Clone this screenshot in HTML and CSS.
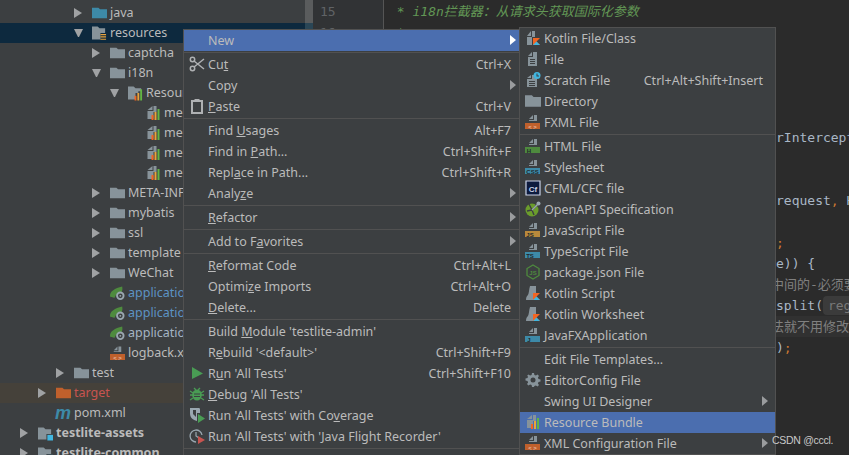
FILE: index.html
```html
<!DOCTYPE html>
<html lang="en">
<head>
<meta charset="utf-8">
<title>IDE context menu</title>
<link rel="stylesheet" href="styles.css">
</head>
<body>
<svg class="sprite" aria-hidden="true">
  <defs>
    <symbol id="folder" viewBox="0 0 14 14"><path d="M0 2h6l1.500 1.500H14V12H0z" fill="#87939a"/></symbol>
    <symbol id="folder-src" viewBox="0 0 14 14"><path d="M0 2h6l1.500 1.500H14V12H0z" fill="#3d8aa8"/></symbol>
    <symbol id="folder-orange" viewBox="0 0 14 14"><path d="M0 2h6l1.500 1.500H14V12H0z" fill="#c0602c"/></symbol>
    <symbol id="folder-res" viewBox="0 0 16 16"><path d="M0 1h6l2 2h6v5H9v7H0z" fill="#87939a"/><path d="M9 9h6v1.300H9zM9 11.500h6v1.300H9zM9 14h6v1.300H9z" fill="#e8a33d"/></symbol>
    <symbol id="folder-mod" viewBox="0 0 16 16"><path d="M0 2h6l2 2h6v5H9v6H0z" fill="#87939a"/><path d="M10 10h6v6h-6z" fill="#40b6e0"/></symbol>
    <symbol id="folder-bundle" viewBox="0 0 16 16"><path d="M0 1h6l2 2h6v3h-3v2H8v7H0z" fill="#87939a"/><path d="M7 11h2v5H7z" fill="#f26522"/><path d="M10 8h2v8h-2z" fill="#e8a33d"/><path d="M13 4h2v12h-2z" fill="#62b543"/></symbol>
    <symbol id="doc-bundle" viewBox="0 0 14 16"><path d="M6 1v4H1zM7 1h3v6H7v7H1V6h6z" fill="#87939a"/><path d="M5 10h2v5H5z" fill="#f26522"/><path d="M8 7h2v8H8z" fill="#e8a33d"/><path d="M11 4h2v11h-2z" fill="#62b543"/></symbol>
    <symbol id="spring" viewBox="0 0 16 16"><path d="M0 11C0 6 5 3 13 1c1 5-1 7-4 8-2 .5-3 1-4 4-3 0-5 0-5-2z" fill="#4e8a3e"/><circle cx="11" cy="11" r="4.500" fill="#9aa7b0"/><circle cx="11" cy="11" r="2.500" fill="#3c3f41"/><circle cx="11" cy="11" r="1" fill="#9aa7b0"/></symbol>
    <symbol id="doc" viewBox="0 0 16 16"><path d="M7 1v4H3zM8 1h1l3 0v14H3V6h5z" fill="#87939a"/><path d="M5 8h5v1H5zM5 10h5v1H5zM5 12h5v1H5z" fill="#3c3f41"/></symbol>
    <symbol id="doc-scratch" viewBox="0 0 16 16"><path d="M6 3v3H2zM7 3h2v3h3v9H2V7h5z" fill="#87939a"/><path d="M4 9h6v1H4zM4 11h6v1H4zM4 13h6v1H4z" fill="#3c3f41"/><circle cx="12" cy="3.500" r="3.500" fill="#40b6e0"/><path d="M11.500 1.500h1v2h1.500v1h-2.500z" fill="#3c3f41"/></symbol>
    <symbol id="kotlin-file" viewBox="0 0 16 16"><path d="M6 1v5H2zM7 1h3v6H7v8H2V7h5z" fill="#87939a"/><path d="M8 8h7l-3.500 3.500L15 15H8z" fill="#f26522"/><path d="M8 15l3.500-3.500L15 15z" fill="#40b6e0"/></symbol>
    <symbol id="kotlin-script" viewBox="0 0 16 16"><path d="M5 1h6v7H8v7H1c0-3 1-4 2-5 1-2 1-6 2-9z" fill="#87939a"/><path d="M8 8h7l-3.500 3.500L15 15H8z" fill="#f26522"/><path d="M8 15l3.500-3.500L15 15z" fill="#40b6e0"/></symbol>
    <symbol id="band-doc" viewBox="0 0 16 16"><path d="M8 1v4H4zM9 1h3v6H4V6h5z" fill="#87939a"/></symbol>
    <symbol id="cf" viewBox="0 0 16 16"><path d="M1 1h14v14H1z" fill="#0d1b3e" stroke="#c9d2e8" stroke-width="1.200"/></symbol>
    <symbol id="openapi" viewBox="0 0 16 16"><circle cx="7" cy="9" r="6.500" fill="#6b9d2c"/><path d="M4 3l3 6-5 1M7 9l3-3 3-4M7 9l2 5" stroke="#3c3f41" stroke-width="1.400" fill="none"/><circle cx="13.500" cy="2.500" r="2" fill="#9aa7b0"/><path d="M7 9l6-6" stroke="#9aa7b0" stroke-width="1.400"/></symbol>
    <symbol id="nodejs" viewBox="0 0 16 16"><path d="M8 1l6 3.500v7L8 15l-6-3.500v-7z" fill="none" stroke="#4e8a3e" stroke-width="1.300"/></symbol>
    <symbol id="gear" viewBox="0 0 16 16"><path d="M7 1h2l.4 2 1.500.6L12.600 2.500 14 3.900l-1.100 1.700.6 1.500 2 .4v2l-2 .4-.6 1.500 1.100 1.700-1.400 1.400-1.700-1.100-1.500.6L9 15H7l-.4-2-1.500-.6-1.700 1.100L2 12.100l1.100-1.700-.6-1.500-2-.4v-2l2-.4.6-1.500L2 3.900l1.400-1.400 1.700 1.100 1.500-.6z" fill="#87939a"/><circle cx="8" cy="8" r="2.500" fill="#3c3f41"/></symbol>
    <symbol id="cut" viewBox="0 0 16 16"><g fill="none" stroke="#afb1b3" stroke-width="1.500"><circle cx="3.500" cy="3.500" r="2.200"/><circle cx="3.500" cy="12.500" r="2.200"/><path d="M5 5l10 8M5 11L15 3"/></g></symbol>
    <symbol id="paste" viewBox="0 0 16 16"><path d="M3 3h10v12H3z" fill="none" stroke="#afb1b3" stroke-width="2"/><path d="M5.500 1h5v3h-5z" fill="#afb1b3"/></symbol>
    <symbol id="run" viewBox="0 0 16 16"><path d="M3 2l11 6.500L3 14z" fill="#499c54"/></symbol>
    <symbol id="debug" viewBox="0 0 16 16"><path d="M1 5l3 2M15 5l-3 2M1 9h3M15 9h-3M1 14l3-2M15 14l-3-2M5 2l2 2M11 2L9 4" stroke="#499c54" stroke-width="1.300"/><ellipse cx="8" cy="9" rx="4.800" ry="5.500" fill="#499c54"/><path d="M5 7.500h6v1H5zM5 10h6v1H5z" fill="#3c3f41"/></symbol>
    <symbol id="coverage" viewBox="0 0 16 16"><path d="M1 1h9c1 0 1 1 1 2v3H8v8C4 13 1 11 1 6z" fill="#9aa7b0"/><path d="M4 3h3v7L4 7z" fill="#3c3f41"/><path d="M9 7l7 4.500L9 16z" fill="#499c54"/></symbol>
    <symbol id="recorder" viewBox="0 0 16 16"><path d="M7 14A6 6 0 1 1 13 7" fill="none" stroke="#9aa7b0" stroke-width="1.300"/><path d="M7 4v4l3 2" fill="none" stroke="#9aa7b0" stroke-width="1.200"/><path d="M9 8l7 4-7 4z" fill="#c75450"/></symbol>
  </defs>
</svg>

<main class="ide">
  <section class="tree">
    <div class="row d3"><i class="arr"></i><svg class="ti"><use href="#folder-src"/></svg><span>java</span></div>
    <div class="row d3 sel"><i class="arr down"></i><svg class="ti"><use href="#folder-res"/></svg><span>resources</span></div>
    <div class="row d4"><i class="arr"></i><svg class="ti"><use href="#folder"/></svg><span>captcha</span></div>
    <div class="row d4"><i class="arr down"></i><svg class="ti"><use href="#folder"/></svg><span>i18n</span></div>
    <div class="row d5"><i class="arr down"></i><svg class="ti"><use href="#folder-bundle"/></svg><span>Resource Bundle 'messages'</span></div>
    <div class="row d6"><i class="arr none"></i><svg class="ti"><use href="#doc-bundle"/></svg><span>messages.properties</span></div>
    <div class="row d6"><i class="arr none"></i><svg class="ti"><use href="#doc-bundle"/></svg><span>messages_en.properties</span></div>
    <div class="row d6"><i class="arr none"></i><svg class="ti"><use href="#doc-bundle"/></svg><span>messages_ja.properties</span></div>
    <div class="row d6"><i class="arr none"></i><svg class="ti"><use href="#doc-bundle"/></svg><span>messages_zh.properties</span></div>
    <div class="row d4"><i class="arr"></i><svg class="ti"><use href="#folder"/></svg><span>META-INF</span></div>
    <div class="row d4"><i class="arr"></i><svg class="ti"><use href="#folder"/></svg><span>mybatis</span></div>
    <div class="row d4"><i class="arr"></i><svg class="ti"><use href="#folder"/></svg><span>ssl</span></div>
    <div class="row d4"><i class="arr"></i><svg class="ti"><use href="#folder"/></svg><span>template</span></div>
    <div class="row d4"><i class="arr"></i><svg class="ti"><use href="#folder"/></svg><span>WeChat</span></div>
    <div class="row d4"><i class="arr none"></i><svg class="ti"><use href="#spring"/></svg><span class="blue">application.yml</span></div>
    <div class="row d4"><i class="arr none"></i><svg class="ti"><use href="#spring"/></svg><span class="blue">application-dev.yml</span></div>
    <div class="row d4"><i class="arr none"></i><svg class="ti"><use href="#spring"/></svg><span class="pale">application-prod.yml</span></div>
    <div class="row d4"><i class="arr none"></i><svg class="ti xml"><use href="#band-doc"/><rect x="0" y="9" width="15" height="6" fill="#c0602c"/><text x="7.500" y="14.500" class="band-t">&lt; &gt;</text></svg><span>logback.xml</span></div>
    <div class="row d2"><i class="arr"></i><svg class="ti"><use href="#folder"/></svg><span>test</span></div>
    <div class="row d1 excluded"><i class="arr"></i><svg class="ti"><use href="#folder-orange"/></svg><span class="red">target</span></div>
    <div class="row d1"><i class="arr none"></i><svg class="ti" viewBox="0 0 15 15"><text x="-1" y="13" class="maven">m</text></svg><span>pom.xml</span></div>
    <div class="row d0"><i class="arr"></i><svg class="ti"><use href="#folder-mod"/></svg><span class="bold">testlite-assets</span></div>
    <div class="row d0"><i class="arr"></i><svg class="ti"><use href="#folder-mod"/></svg><span class="bold">testlite-common</span></div>
  </section>
  <div class="scroll"><div class="scroll-sel"></div></div>
  <div class="gutter">
    <div class="ln">15</div>
    <div class="ln">16</div>
  </div>
  <section class="editor">
    <div class="cl cm"> * i18n拦截器&#xFF1A;从请求头获取国际化参数</div>
    <div class="cl cm"> *</div>
    <div class="cl"></div>
    <div class="cl"></div>
    <div class="cl"></div>
    <div class="cl"></div>
    <div class="cl r">rInterceptor {</div>
    <div class="cl"></div>
    <div class="cl"></div>
    <div class="cl r">request<b>,</b> HttpServletResponse</div>
    <div class="cl"></div>
    <div class="cl r"><b>;</b></div>
    <div class="cl r">e)) {</div>
    <div class="cl r cjk">中间的-必须要</div>
    <div class="cl r">split(<em class="hint">regex: "-"</em></div>
    <div class="cl r cjk tint">法就不用修改</div>
    <div class="cl r">)<b>;</b></div>
  </section>
</main>

<nav class="menu main-menu">
  <div class="item sub on"><span class="ic"></span><span class="lb">New</span><i class="tri lit"></i></div>
  <hr>
  <div class="item"><svg class="ic"><use href="#cut"/></svg><span class="lb">Cu<u>t</u></span><span class="sc">Ctrl+X</span></div>
  <div class="item sub"><span class="ic"></span><span class="lb">Copy</span><i class="tri"></i></div>
  <div class="item"><svg class="ic"><use href="#paste"/></svg><span class="lb"><u>P</u>aste</span><span class="sc">Ctrl+V</span></div>
  <hr>
  <div class="item"><span class="ic"></span><span class="lb">Find <u>U</u>sages</span><span class="sc">Alt+F7</span></div>
  <div class="item"><span class="ic"></span><span class="lb">Find in <u>P</u>ath...</span><span class="sc">Ctrl+Shift+F</span></div>
  <div class="item"><span class="ic"></span><span class="lb">Repl<u>a</u>ce in Path...</span><span class="sc">Ctrl+Shift+R</span></div>
  <div class="item sub"><span class="ic"></span><span class="lb">Analy<u>z</u>e</span><i class="tri"></i></div>
  <hr>
  <div class="item sub"><span class="ic"></span><span class="lb"><u>R</u>efactor</span><i class="tri"></i></div>
  <hr>
  <div class="item sub"><span class="ic"></span><span class="lb">Add to F<u>a</u>vorites</span><i class="tri"></i></div>
  <hr>
  <div class="item"><span class="ic"></span><span class="lb"><u>R</u>eformat Code</span><span class="sc">Ctrl+Alt+L</span></div>
  <div class="item"><span class="ic"></span><span class="lb">Optimi<u>z</u>e Imports</span><span class="sc">Ctrl+Alt+O</span></div>
  <div class="item"><span class="ic"></span><span class="lb"><u>D</u>elete...</span><span class="sc">Delete</span></div>
  <hr>
  <div class="item"><span class="ic"></span><span class="lb">Build <u>M</u>odule 'testlite-admin'</span></div>
  <div class="item"><span class="ic"></span><span class="lb">R<u>e</u>build '&lt;default&gt;'</span><span class="sc">Ctrl+Shift+F9</span></div>
  <div class="item"><svg class="ic"><use href="#run"/></svg><span class="lb">R<u>u</u>n 'All Tests'</span><span class="sc">Ctrl+Shift+F10</span></div>
  <div class="item"><svg class="ic"><use href="#debug"/></svg><span class="lb"><u>D</u>ebug 'All Tests'</span></div>
  <div class="item"><svg class="ic"><use href="#coverage"/></svg><span class="lb">Run 'All Tests' with Co<u>v</u>erage</span></div>
  <div class="item"><svg class="ic"><use href="#recorder"/></svg><span class="lb">Run 'All Tests' with 'Java Flight Recorder'</span></div>
  <hr>
</nav>

<nav class="menu sub-menu">
  <div class="item"><svg class="ic"><use href="#kotlin-file"/></svg><span class="lb">Kotlin File/Class</span></div>
  <div class="item"><svg class="ic"><use href="#doc"/></svg><span class="lb">File</span></div>
  <div class="item"><svg class="ic"><use href="#doc-scratch"/></svg><span class="lb">Scratch File</span><span class="sc">Ctrl+Alt+Shift+Insert</span></div>
  <div class="item"><svg class="ic"><use href="#folder"/></svg><span class="lb">Directory</span></div>
  <div class="item"><svg class="ic"><use href="#band-doc"/><rect x="0" y="9" width="15" height="6" fill="#c0602c"/><text x="7.500" y="14.500" class="band-t">&lt; &gt;</text></svg><span class="lb">FXML File</span></div>
  <hr>
  <div class="item"><svg class="ic"><use href="#band-doc"/><rect x="0" y="9" width="15" height="6" fill="#4e8a3e"/><text x="4" y="14.500" class="band-t dark">H</text></svg><span class="lb">HTML File</span></div>
  <div class="item"><svg class="ic"><use href="#band-doc"/><rect x="0" y="9" width="15" height="6" fill="#3d8aa8"/><text x="7.500" y="14.500" class="band-t dark">CSS</text></svg><span class="lb">Stylesheet</span></div>
  <div class="item"><svg class="ic"><use href="#cf"/><text x="8" y="11.500" class="cf-t">Cf</text></svg><span class="lb">CFML/CFC file</span></div>
  <div class="item"><svg class="ic"><use href="#openapi"/></svg><span class="lb">OpenAPI Specification</span></div>
  <div class="item"><svg class="ic"><use href="#band-doc"/><rect x="0" y="9" width="15" height="6" fill="#b9893c"/><text x="5" y="14.500" class="band-t dark">JS</text></svg><span class="lb">JavaScript File</span></div>
  <div class="item"><svg class="ic"><use href="#band-doc"/><rect x="0" y="9" width="15" height="6" fill="#3d8aa8"/><text x="5" y="14.500" class="band-t dark">TS</text></svg><span class="lb">TypeScript File</span></div>
  <div class="item"><svg class="ic"><use href="#nodejs"/><text x="8" y="11" class="node-t">JS</text></svg><span class="lb">package.json File</span></div>
  <div class="item"><svg class="ic"><use href="#kotlin-script"/></svg><span class="lb">Kotlin Script</span></div>
  <div class="item"><svg class="ic"><use href="#kotlin-script"/></svg><span class="lb">Kotlin Worksheet</span></div>
  <div class="item"><svg class="ic"><use href="#band-doc"/><rect x="0" y="9" width="15" height="6" fill="#3d8aa8"/><text x="4" y="14.500" class="band-t dark">J</text></svg><span class="lb">JavaFXApplication</span></div>
  <hr>
  <div class="item"><span class="ic"></span><span class="lb">Edit File Templates...</span></div>
  <div class="item"><svg class="ic"><use href="#gear"/></svg><span class="lb">EditorConfig File</span></div>
  <div class="item sub"><span class="ic"></span><span class="lb">Swing UI Designer</span><i class="tri"></i></div>
  <div class="item on"><svg class="ic"><use href="#doc-bundle"/></svg><span class="lb">Resource Bundle</span></div>
  <div class="item sub"><svg class="ic"><use href="#band-doc"/><rect x="0" y="9" width="15" height="6" fill="#c0602c"/><text x="7.500" y="14.500" class="band-t">&lt; &gt;</text></svg><span class="lb">XML Configuration File</span><i class="tri"></i></div>
</nav>

<div class="watermark">CSDN @cccl.</div>
</body>
</html>
```

FILE: styles.css
```css
* { box-sizing: border-box; }
html, body { margin: 0; padding: 0; }
body {
  position: relative;
  width: 849px;
  height: 455px;
  overflow: hidden;
  background: #3c3f41;
  color: #bbbbbb;
  font: 12.5px/18px "Noto Sans", "Open Sans", sans-serif;
}
.sprite { position: absolute; width: 0; height: 0; }
.ide { display: flex; height: 455px; }

/* project tree */
.tree { width: 305px; padding-top: 3px; flex: none; overflow: hidden; }
.row { display: flex; align-items: center; height: 20px; white-space: nowrap; }
.row.d0 { padding-left: 20px; }
.row.d1 { padding-left: 38px; }
.row.d2 { padding-left: 56px; }
.row.d3 { padding-left: 74px; }
.row.d4 { padding-left: 92px; }
.row.d5 { padding-left: 110px; }
.row.d6 { padding-left: 128px; }
.row.sel { background: #0d293e; }
.row.excluded { background: #45413a; }
.arr {
  flex: none;
  width: 8px;
  height: 10px;
  margin-right: 10px;
  border-left: 8px solid #a0a2a4;
  border-top: 5px solid transparent;
  border-bottom: 5px solid transparent;
}
.arr.down {
  width: 9px;
  height: 8px;
  margin-right: 9px;
  border-top: 8px solid #a0a2a4;
  border-left: 4.5px solid transparent;
  border-right: 4.5px solid transparent;
  border-bottom: 0;
}
.arr.none { border: 0; height: 0; }
.ti { flex: none; width: 15px; height: 16px; margin-right: 3px; overflow: visible; }
.blue { color: #5c93c4; }
.pale { color: #a4b4c4; }
.red { color: #c75450; }
.bold { font-weight: 700; }
.maven { font: italic 700 18px "Liberation Sans", sans-serif; fill: #3d8aa8; }

/* right of the tree */
.scroll { width: 8px; flex: none; background: #5a5c5d; }
.scroll-sel { height: 20px; margin-top: 23px; background: #2a4656; }
.gutter {
  width: 71px;
  flex: none;
  padding: 1px 0 0 7px;
  background: #313335;
  border-right: 1px solid #555555;
  color: #606366;
  font: 13px/21px "DejaVu Sans Mono", monospace;
}
.ln { height: 21px; }
.editor {
  flex: 1;
  padding-top: 1px;
  overflow: hidden;
  background: #2b2b2b;
  color: #a9b7c6;
  font: 13px/21px "DejaVu Sans Mono", "Noto Sans CJK SC", monospace;
}
.cl { height: 21px; white-space: pre; }
.cl.cm { padding-left: 5px; color: #629755; font-style: italic; }
.cl.r { padding-left: 392px; }
.cl.cjk { padding-left: 387px; color: #808080; }
.cl.tint { background: #313131; }
.cl b { color: #cc7832; font-weight: 400; }
.hint {
  padding: 2px 5px;
  border-radius: 4px;
  background: #3b3b3b;
  color: #787878;
  font-style: normal;
}

/* menus */
.menu {
  position: absolute;
  background: #3c3f41;
  border: 1px solid #515151;
  overflow: hidden;
}
.main-menu { left: 183px; top: 29px; width: 337px; height: 440px; }
.sub-menu { left: 519px; top: 27px; width: 257px; height: 428px; }
.item {
  display: flex;
  align-items: center;
  height: 21px;
  padding: 0 8px 0 5px;
  white-space: nowrap;
}
.sub-menu .item { padding-right: 12px; }
.item.sub { padding-right: 3px; }
.sub-menu .item.sub { padding-right: 7px; }
.item.on { background: #4b6eaf; }
.ic { flex: none; width: 16px; height: 16px; margin: 0 3px 1px 0; overflow: visible; }
.lb { flex: 1; }
.sc { color: #bbbbbb; }
.tri {
  flex: none;
  width: 6px;
  height: 10px;
  margin-bottom: 1px;
  border-left: 6px solid #9a9c9e;
  border-top: 5px solid transparent;
  border-bottom: 5px solid transparent;
}
.tri.lit { border-left-color: #ffffff; }
.menu hr {
  height: 3px;
  margin: 0;
  border: 0;
  background: linear-gradient(#3c3f41 1px, #515151 1px, #515151 2px, #3c3f41 2px);
}
.band-t { font: 700 6px "Liberation Sans", sans-serif; fill: #e6b9a0; text-anchor: middle; }
.band-t.dark { fill: #20282c; }
.cf-t { font: 700 8px "Liberation Sans", sans-serif; fill: #c9d2e8; text-anchor: middle; }
.node-t { font: 700 6px "Liberation Sans", sans-serif; fill: #4e8a3e; text-anchor: middle; }

.watermark {
  position: absolute;
  left: 772px;
  top: 432px;
  color: #c9c9c9;
  font: 10.5px/16px "Liberation Sans", sans-serif;
  letter-spacing: -0.3px;
}
```
